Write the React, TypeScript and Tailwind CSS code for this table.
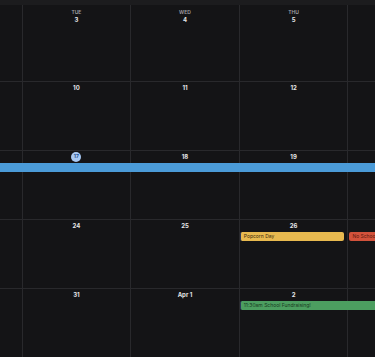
const days = ['MON', 'TUE', 'WED', 'THU', 'FRI']

const weeks = [
  { dates: ['2', '3', '4', '5', '6'] },
  { dates: ['9', '10', '11', '12', '13'] },
  { dates: ['16', '17', '18', '19', '20'], today: 1 },
  { dates: ['23', '24', '25', '26', '27'] },
  { dates: ['30', '31', 'Apr 1', '2', '3'] },
]

const colStart = ['col-start-1', 'col-start-2', 'col-start-3', 'col-start-4', 'col-start-5']

// first and last columns sit off screen; their labels are not drawn
const visible = (i: number) => i > 0 && i < 4

export default function App() {
  return (
    <div
      className="w-[375px] h-[357px] overflow-hidden bg-[#141416] text-[#e4e4e6]"
      style={{ fontFamily: 'Inter, "Liberation Sans", sans-serif' }}
    >
      <div className="h-[5px] bg-[#1c1c1e]" />
      <div className="ml-[-86px] w-[543px]">
        {weeks.map((w, wi) => (
          <div
            key={wi}
            className={`grid grid-cols-[repeat(5,108.6px)] grid-rows-[12px_9px_1fr] ${
              wi === 0 ? 'h-[76px]' : 'h-[69px] border-t border-[#29292c]'
            }`}
          >
            {w.dates.map((d, di) => (
              <div
                key={di}
                className={`${colStart[di]} row-start-1 row-end-4 border-r border-[#29292c] flex flex-col items-center pt-[3px]`}
              >
                {visible(di) && wi === 0 && (
                  <div className="text-[5px] leading-[5px] font-semibold text-[#a0a0a4] mb-[2px] mt-[2px]">
                    {days[di]}
                  </div>
                )}
                {visible(di) &&
                  (w.today === di ? (
                    <div className="mt-[-2px] w-[10px] h-[10px] rounded-full bg-[#a9c9f3] text-[#24508e] text-[5px] font-bold flex items-center justify-center">
                      {d}
                    </div>
                  ) : (
                    <div className="text-[6px] leading-[6px] font-bold">{d}</div>
                  ))}
              </div>
            ))}

            {wi === 2 && (
              <div className="col-start-1 col-span-5 row-start-2 bg-[#4b9bd8]" />
            )}
            {wi === 3 && (
              <>
                <div className="col-start-4 row-start-2 mr-[4px] rounded-[2px] bg-[#e8b94f] border-l border-[#2b3a5c] text-[#3b2a0c] text-[5px] leading-[9px] pl-[3px] truncate">
                  Popcorn Day
                </div>
                <div className="col-start-5 row-start-2 ml-[1px] rounded-[2px] bg-[#d2523b] text-[#5c180e] text-[5px] leading-[9px] pl-[3px] truncate">
                  No School
                </div>
              </>
            )}
            {wi === 4 && (
              <div className="col-start-4 col-span-2 row-start-2 rounded-[2px] bg-[#4c9e60] border-l border-[#2b3a5c] text-[#173a1f] text-[5px] leading-[9px] pl-[3px] truncate">
                11:30am School Fundraising!
              </div>
            )}
          </div>
        ))}
      </div>
    </div>
  )
}
